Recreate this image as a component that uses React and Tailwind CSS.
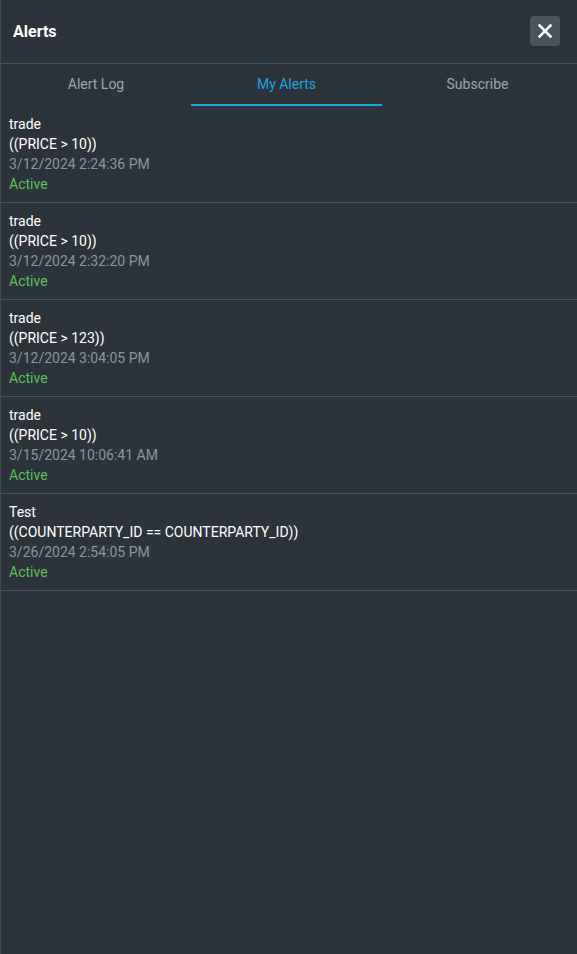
import React, { useState } from "react";

const alerts = [
  { name: "trade", expr: "((PRICE > 10))", date: "3/12/2024 2:24:36 PM", status: "Active" },
  { name: "trade", expr: "((PRICE > 10))", date: "3/12/2024 2:32:20 PM", status: "Active" },
  { name: "trade", expr: "((PRICE > 123))", date: "3/12/2024 3:04:05 PM", status: "Active" },
  { name: "trade", expr: "((PRICE > 10))", date: "3/15/2024 10:06:41 AM", status: "Active" },
  { name: "Test", expr: "((COUNTERPARTY_ID == COUNTERPARTY_ID))", date: "3/26/2024 2:54:05 PM", status: "Active" },
];

const tabs = ["Alert Log", "My Alerts", "Subscribe"];

export default function App() {
  const [tab, setTab] = useState("My Alerts");

  return (
    <div
      className="h-[954px] w-[577px] bg-[#2d333b] border-l border-[#434b53] flex flex-col text-white"
      style={{ fontFamily: "Roboto, 'Liberation Sans', sans-serif" }}
    >
      {/* Header */}
      <div className="h-[64px] shrink-0 flex items-center justify-between pl-3 pr-[17px] border-b border-[#4a5159]">
        <h1 className="text-base font-bold mt-px">Alerts</h1>
        <button className="w-[30px] h-[30px] mb-px rounded bg-[#4a535a] flex items-center justify-center">
          <svg width="14" height="14" viewBox="0 0 14 14">
            <path d="M1.5 1.5 L12.5 12.5 M12.5 1.5 L1.5 12.5" stroke="white" strokeWidth="2.6" strokeLinecap="square" />
          </svg>
        </button>
      </div>

      {/* Tabs */}
      <div className="h-[42px] shrink-0 grid grid-cols-[190px_191px_191px]">
        {tabs.map((t) => (
          <button
            key={t}
            onClick={() => setTab(t)}
            className={`relative flex items-center justify-center text-sm pb-[2px] ${
              tab === t ? "text-[#1ea5dc]" : "text-[#9ba5ae]"
            }`}
          >
            {t}
            {tab === t && <span className="absolute left-0 right-0 bottom-0 h-[2px] bg-[#1ea5dc]" />}
          </button>
        ))}
      </div>

      {/* Alert list */}
      <div className="flex-1 overflow-auto">
        {alerts.map((a, i) => (
          <div key={i} className="px-2 py-2 border-b border-[#4a5159] text-sm leading-5">
            <p className="text-white">{a.name}</p>
            <p className="text-white">{a.expr}</p>
            <p className="text-[#8a949c]">{a.date}</p>
            <p className="text-[#5cbf5c]">{a.status}</p>
          </div>
        ))}
      </div>
    </div>
  );
}
